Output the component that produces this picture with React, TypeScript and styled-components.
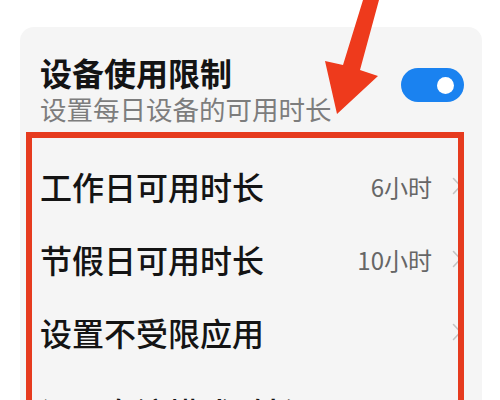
import React from "react";
import styled, { createGlobalStyle } from "styled-components";

const Global = createGlobalStyle`
  html, body { margin: 0; padding: 0; background: #ffffff; }
  body { font-family: "Noto Sans CJK SC", "Noto Sans", sans-serif; overflow: hidden; }
`;

const Page = styled.div`
  position: relative;
  width: 500px;
  height: 400px;
  overflow: hidden;
  padding: 27px 18px 0 20px;
  box-sizing: border-box;
`;

const Card = styled.div`
  background: #f5f5f5;
  border-radius: 14px;
  padding: 25px 20px 0 20px;
  height: 420px;
  box-sizing: border-box;
`;

const Header = styled.div`
  display: flex;
  align-items: center;
  justify-content: space-between;
`;

const HeadText = styled.div`
  display: flex;
  flex-direction: column;
`;

const Title = styled.div`
  font-size: 32px;
  line-height: 40px;
  font-weight: 700;
  color: #141414;
`;

const Subtitle = styled.div`
  font-size: 26.5px;
  line-height: 32px;
  color: #7d7d7d;
  margin-top: 1px;
`;

const Toggle = styled.div`
  width: 63px;
  height: 34px;
  border-radius: 17px;
  background: #1a82f0;
  display: flex;
  align-items: center;
  justify-content: flex-end;
  padding-right: 10px;
  box-sizing: border-box;
  margin-bottom: 7px;
  margin-right: -2px;
`;

const Knob = styled.div`
  width: 17px;
  height: 17px;
  border-radius: 50%;
  background: #ffffff;
`;

const List = styled.div`
  margin-top: 24px;
  display: flex;
  flex-direction: column;
`;

const Row = styled.div<{ $h?: number }>`
  height: ${(p) => p.$h ?? 73}px;
  display: flex;
  align-items: center;
  justify-content: space-between;
`;

const Label = styled.div`
  font-size: 32px;
  line-height: 40px;
  font-weight: 500;
  color: #141414;
`;

const Right = styled.div`
  display: flex;
  align-items: center;
  gap: 20px;
`;

const Value = styled.div`
  font-size: 24px;
  line-height: 30px;
  color: #666666;
  padding-top: 2px;
`;

const Chevron = styled.svg`
  width: 10px;
  height: 18px;
  display: block;
`;

const RedBox = styled.div`
  position: absolute;
  left: 26px;
  top: 132px;
  width: 438px;
  height: 300px;
  border: 6px solid #e63b1e;
  box-sizing: border-box;
  pointer-events: none;
`;

const Arrow = styled.svg`
  position: absolute;
  left: 0;
  top: 0;
  width: 500px;
  height: 400px;
  pointer-events: none;
`;

const rows = [
  { label: "工作日可用时长", value: "6小时", h: 73 },
  { label: "节假日可用时长", value: "10小时", h: 73 },
  { label: "设置不受限应用", value: "", h: 73 },
  { label: "设置专注模式时长", value: "", h: 88 },
];

export default function App() {
  return (
    <>
      <Global />
      <Page>
        <Card>
          <Header>
            <HeadText>
              <Title>设备使用限制</Title>
              <Subtitle>设置每日设备的可用时长</Subtitle>
            </HeadText>
            <Toggle>
              <Knob />
            </Toggle>
          </Header>
          <List>
            {rows.map((r) => (
              <Row key={r.label} $h={r.h}>
                <Label>{r.label}</Label>
                <Right>
                  {r.value && <Value>{r.value}</Value>}
                  <Chevron viewBox="0 0 10 18">
                    <path d="M1.5 1.5 L8.5 9 L1.5 16.5" fill="none" stroke="#c4c4c4" strokeWidth="1.6" strokeLinecap="round" strokeLinejoin="round" />
                  </Chevron>
                </Right>
              </Row>
            ))}
          </List>
        </Card>
        <RedBox />
        <Arrow viewBox="0 0 500 400">
          <polygon points="363,0 379,0 360,70 378,76 337,114 325,61 343,65" fill="#ee3a1c" />
        </Arrow>
      </Page>
    </>
  );
}
